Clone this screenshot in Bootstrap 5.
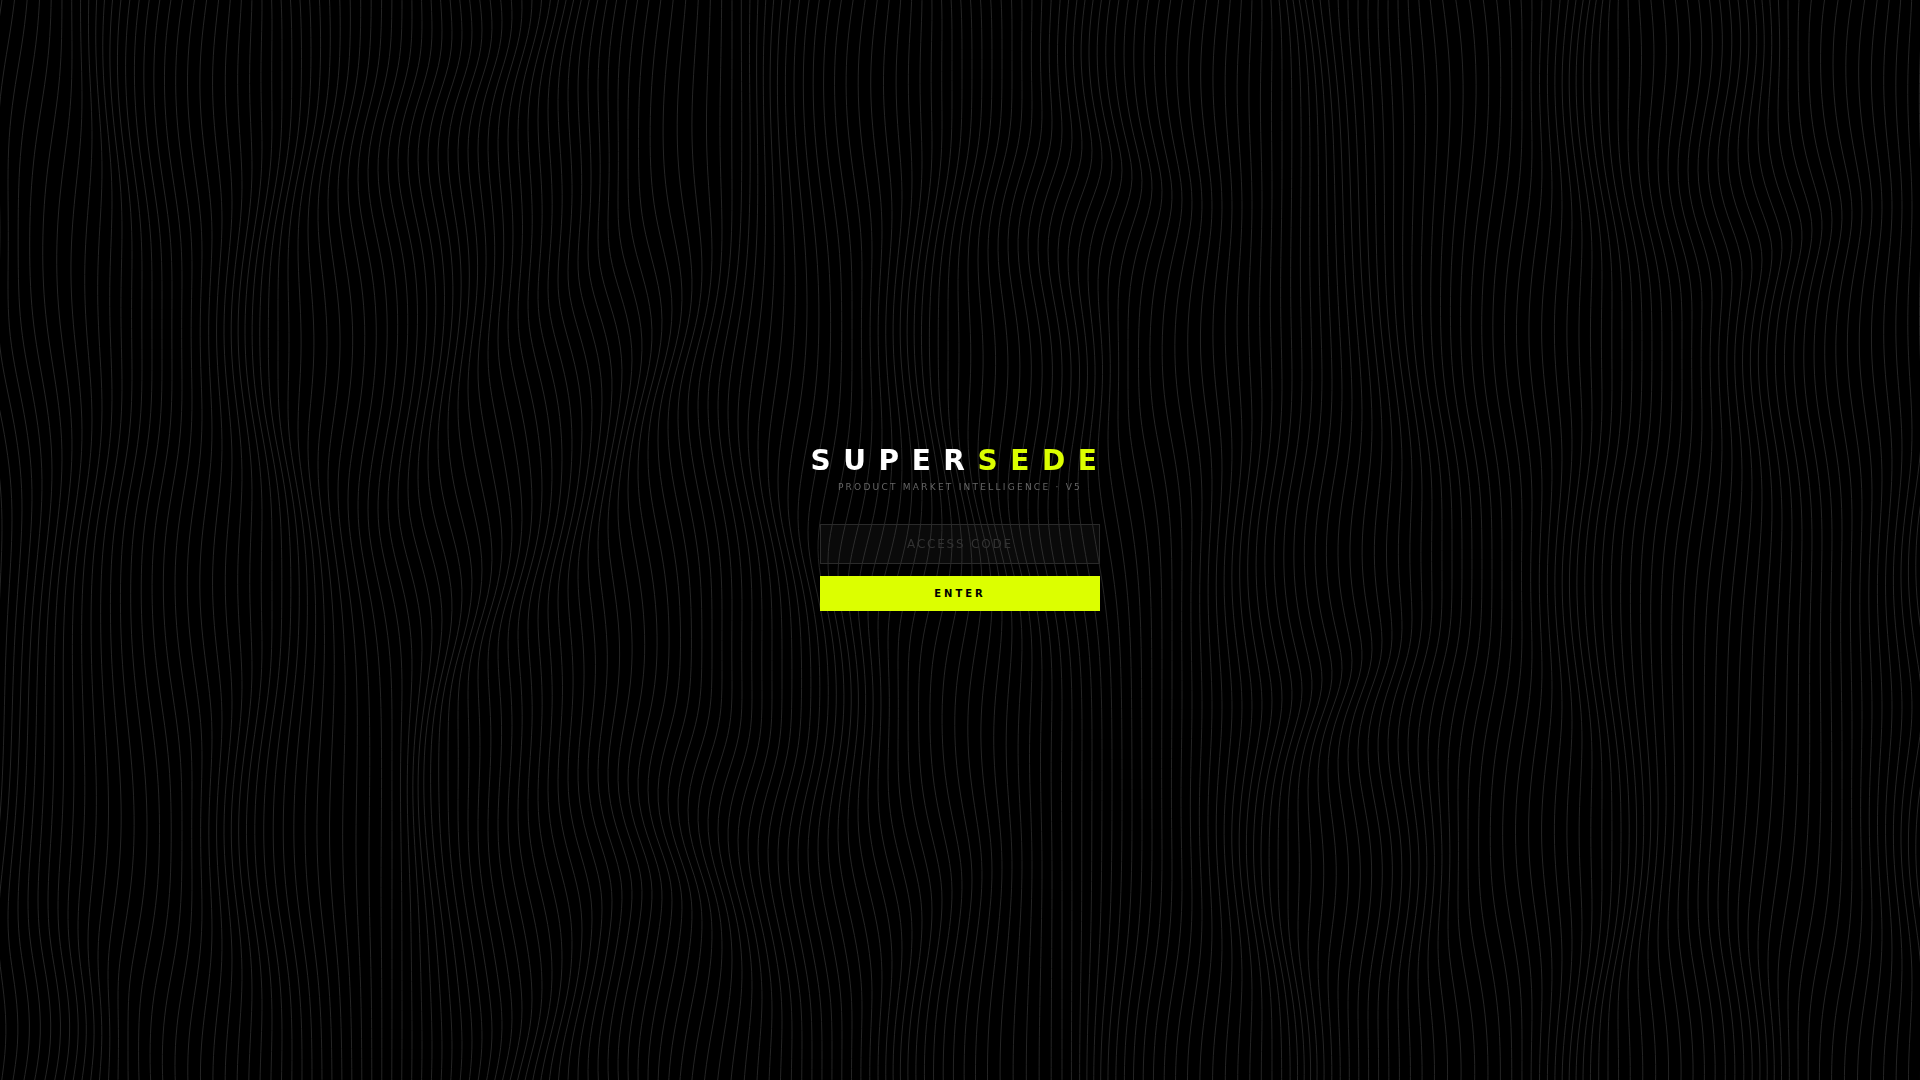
<!DOCTYPE html>
<html lang="en">
<head>
<meta charset="utf-8">
<meta name="viewport" content="width=device-width, initial-scale=1">
<title>Supersede</title>
<link href="https://cdn.jsdelivr.net/npm/bootstrap@5.3.0/dist/css/bootstrap.min.css" rel="stylesheet">
<style>
  body { background: #000; font-family: "DejaVu Sans", sans-serif; }
  .wave-field { z-index: 0; }
  .gate { z-index: 1; }
  .brand { font-size: 28px; line-height: 33px; letter-spacing: .45em; color: #fff; }
  .brand span { color: #dcff00; }
  .tagline { font-size: 9px; line-height: 12px; letter-spacing: .25em; color: #666; margin-bottom: 31px; }
  .gate-form { width: 280px; gap: 12px; }
  .code-input, .code-input:focus {
    height: 40px; background: rgba(255, 255, 255, .04); border: 1px solid #2a2a2a; color: #fff;
    font-size: 12px; letter-spacing: .15em; box-shadow: none;
  }
  .code-input::placeholder { color: #333; opacity: 1; }
  .enter-btn, .enter-btn:hover {
    height: 35px; background: #dcff00; color: #000; font-size: 10px; line-height: 12px; letter-spacing: .3em;
  }
  .status-line { min-height: 13px; font-size: 10px; line-height: 13px; }
</style>
</head>
<body>
<canvas class="wave-field position-fixed top-0 start-0 w-100 h-100" aria-hidden="true"></canvas>

<main class="gate position-relative min-vh-100 d-flex flex-column align-items-center justify-content-center text-center">
  <h1 class="brand fw-bold mb-1 text-nowrap">SUPER<span>SEDE</span></h1>
  <p class="tagline text-nowrap">PRODUCT MARKET INTELLIGENCE · V5</p>
  <form class="gate-form d-flex flex-column" onsubmit="return false">
    <label class="visually-hidden" for="code">Access code</label>
    <input id="code" type="password" class="code-input form-control rounded-0 text-center" placeholder="ACCESS CODE" autocomplete="off">
    <button type="submit" class="enter-btn btn rounded-0 border-0 fw-bold">ENTER</button>
    <div class="status-line" role="status"></div>
  </form>
</main>

<script>
  // Gradient noise over a small repeating lattice: each digit picks a direction.
  const directions = [[-1, -1], [1, -1], [-1, 1], [1, 1]];
  const lattice = ['0232', '2223', '0302', '2200', '2322', '3333', '2322', '3013'];
  const fade = t => t * t * t * (t * (t * 6 - 15) + 10);
  const mix = (a, b, t) => a + (b - a) * t;

  function corner(i, j, x, y) {
    const column = lattice[(i + 8) % 8];
    const g = directions[+column[(j + 4) % 4]];
    return g[0] * (x - i) + g[1] * (y - j);
  }

  function noise(x, y) {
    const i = Math.floor(x), j = Math.floor(y), u = fade(x - i), v = fade(y - j);
    return mix(
      mix(corner(i, j, x, y), corner(i + 1, j, x, y), u),
      mix(corner(i, j + 1, x, y), corner(i + 1, j + 1, x, y), u),
      v
    );
  }

  const gap = 10, overscan = 20, drift = { x: 115.7, y: 43.1 };
  const canvas = document.querySelector('.wave-field');
  const ctx = canvas.getContext('2d');

  // Vertical lines, every point pushed round a small ellipse by the noise.
  function draw() {
    const w = canvas.width = innerWidth, h = canvas.height = innerHeight;
    ctx.strokeStyle = '#252525';
    ctx.lineWidth = 1;
    ctx.beginPath();
    for (let x = -overscan; x <= w + overscan; x += gap) {
      for (let y = -overscan; y <= h + overscan; y += gap) {
        const angle = noise((x + drift.x) * .003, (y + drift.y) * .002) * 8;
        const px = x + Math.cos(angle) * 12, py = y + Math.sin(angle) * 6;
        y === -overscan ? ctx.moveTo(px, py) : ctx.lineTo(px, py);
      }
    }
    ctx.stroke();
  }

  draw();
  addEventListener('resize', draw);
</script>
<script src="https://cdn.jsdelivr.net/npm/bootstrap@5.3.0/dist/js/bootstrap.bundle.min.js"></script>
</body>
</html>
